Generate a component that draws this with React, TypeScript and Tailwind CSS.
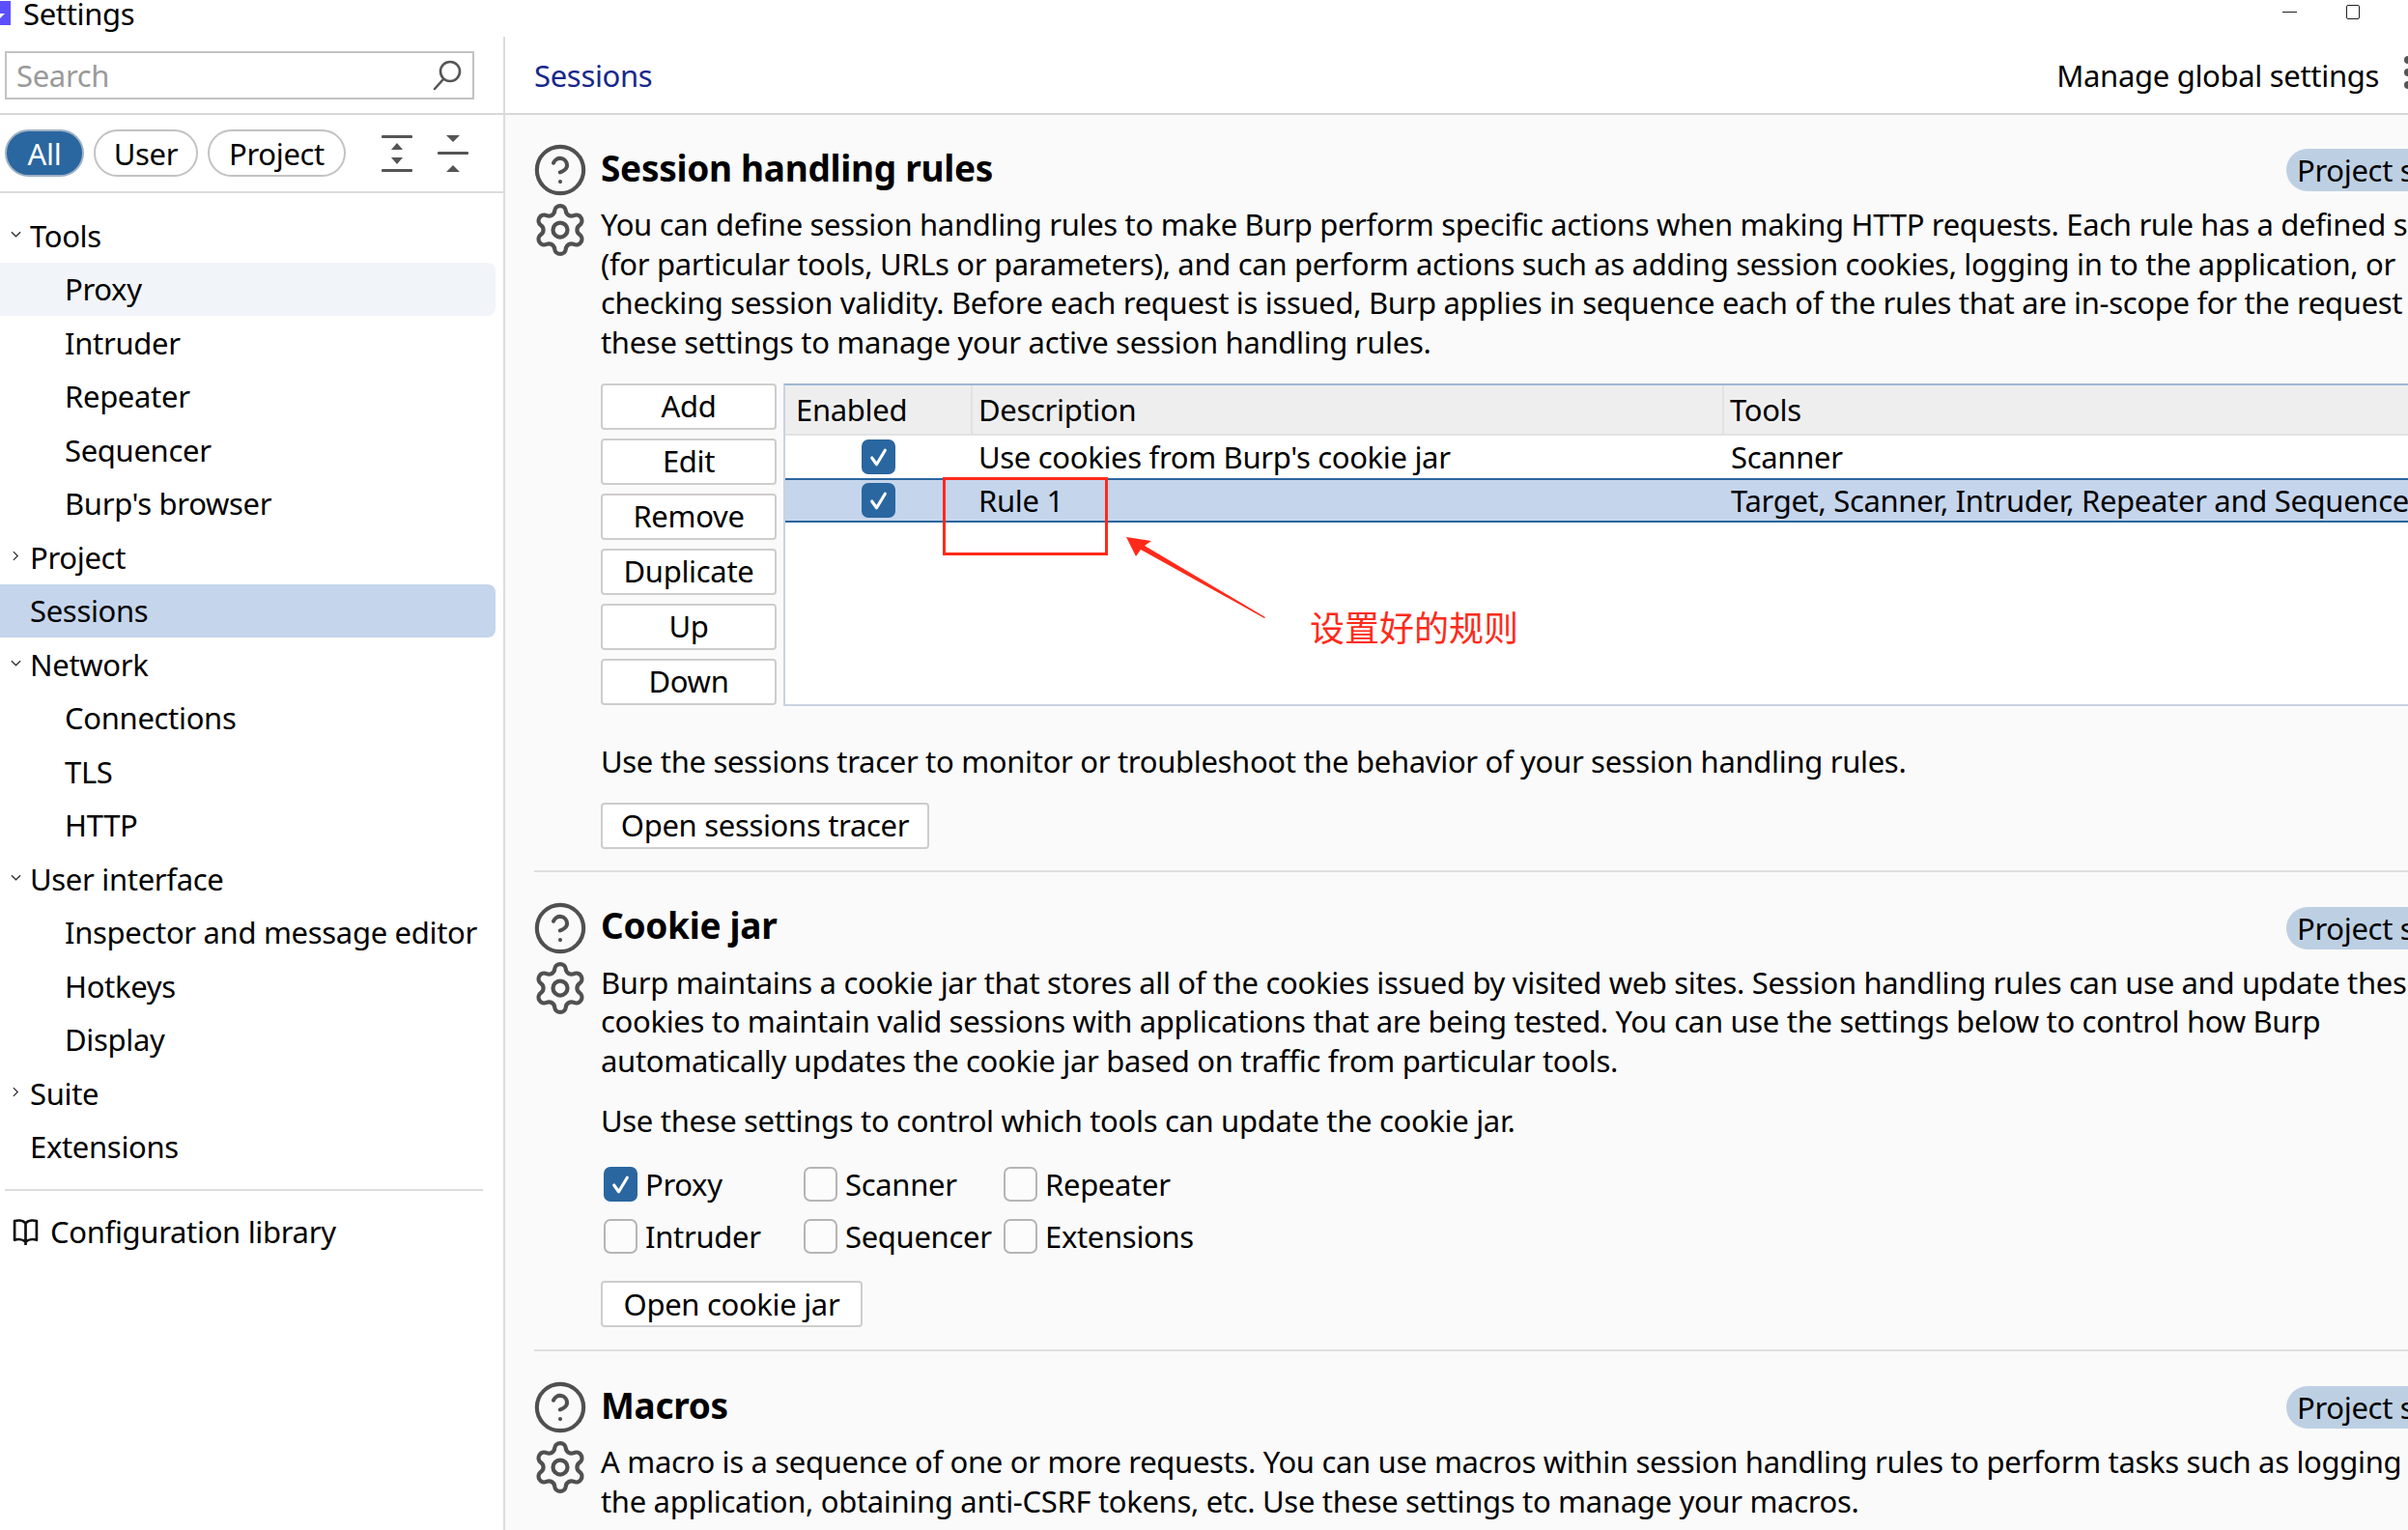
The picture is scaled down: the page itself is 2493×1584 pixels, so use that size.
import { Settings as Gear, CircleHelp } from "lucide-react";

const FONT = "font-['Noto_Sans','Noto_Sans_CJK_SC',sans-serif]";

const tree = [
  { label: "Tools", open: true, level: 0 },
  { label: "Proxy", level: 1, hover: true },
  { label: "Intruder", level: 1 },
  { label: "Repeater", level: 1 },
  { label: "Sequencer", level: 1 },
  { label: "Burp's browser", level: 1 },
  { label: "Project", open: false, level: 0 },
  { label: "Sessions", level: 0, active: true },
  { label: "Network", open: true, level: 0 },
  { label: "Connections", level: 1 },
  { label: "TLS", level: 1 },
  { label: "HTTP", level: 1 },
  { label: "User interface", open: true, level: 0 },
  { label: "Inspector and message editor", level: 1 },
  { label: "Hotkeys", level: 1 },
  { label: "Display", level: 1 },
  { label: "Suite", open: false, level: 0 },
  { label: "Extensions", level: 0 },
];

function Tick() {
  return (
    <svg viewBox="0 0 36 36" className="w-full h-full">
      <path d="M11 19l5 7 9-15" fill="none" stroke="white" strokeWidth="3.2" strokeLinecap="round" strokeLinejoin="round" />
    </svg>
  );
}

function Check({ checked }: { checked?: boolean }) {
  return checked ? (
    <div className="w-[35px] h-[36px] rounded-[7px] bg-[#2a669f] shrink-0">
      <Tick />
    </div>
  ) : (
    <div className="w-[35px] h-[36px] rounded-[7px] border-[2.5px] border-[#b5b5b5] bg-[#fcfcfc] shrink-0" />
  );
}

function Btn({ label, className }: { label: string; className?: string }) {
  return (
    <button className={`h-[48px] bg-white border-2 border-[#cfcccc] rounded-[4px] text-center leading-none ${className ?? ""}`}>
      {label}
    </button>
  );
}

function SectionHead({ title, lines }: { title: string; lines: string[] }) {
  return (
    <div className="flex">
      <div className="w-[69px] shrink-0 text-[#505050]">
        <CircleHelp className="w-[58px] h-[58px] -ml-[2px] -mt-[1px]" strokeWidth={1.7} />
        <Gear className="w-[60px] h-[60px] -ml-[3px] mt-[3px]" strokeWidth={1.7} />
      </div>
      <div className="flex-1 min-w-0">
        <div className="flex items-center justify-between h-[48px] mb-[16px]">
          <h2 className="mt-[2px] text-[37px] font-bold leading-none tracking-[-0.3px]">{title}</h2>
          <div className="h-[44px] w-[172px] -mr-[46px] mt-[8px] pl-[11px] rounded-l-[22px] bg-[#bdd0e3] leading-[44px] overflow-hidden whitespace-nowrap">
            Project settings
          </div>
        </div>
        {lines.map((l) => (
          <p key={l} className="leading-[40.7px] whitespace-nowrap">{l}</p>
        ))}
      </div>
    </div>
  );
}

function Pill({ label, active, w }: { label: string; active?: boolean; w: string }) {
  return (
    <div
      className={`h-[49px] ${w} rounded-full border-2 flex items-center justify-center pt-[2px] ${
        active ? "bg-[#2a669f] border-[#9fb2c4] text-white" : "bg-white border-[#c4c2c2]"
      }`}
    >
      {label}
    </div>
  );
}

export default function App() {
  return (
    <div className={`${FONT} relative w-[2493px] h-[1584px] overflow-hidden bg-white text-black text-[31px] tracking-[-0.32px] flex flex-col`}>
      {/* title bar */}
      <div className="h-[38px] shrink-0 flex items-start relative">
        <div className="w-[11px] h-[25px] mt-[1px] bg-[#5b4fff] relative overflow-hidden">
          <svg viewBox="0 0 11 25" className="absolute inset-0 w-full h-full" fill="white">
            <path d="M0 13h5l-5 5z" />
          </svg>
        </div>
        <span className="ml-[13px] -mt-[6px] leading-[40px]">Settings</span>
        <div className="ml-auto flex items-start mr-[50px]">
          <div className="w-[15px] h-[1px] bg-[#222] mt-[12px] mr-[51px]" />
          <div className="w-[14px] h-[15px] mt-[5px] border border-[#222] rounded-[2px]" />
        </div>
      </div>

      <div className="flex flex-1 min-h-0">
        {/* sidebar */}
        <aside className="w-[523px] shrink-0 border-r-2 border-[#dcdcdc] flex flex-col">
          <div className="h-[81px] shrink-0 border-b-2 border-[#d8d8d8] pl-[5px] pt-[15px]">
            <div className="w-[486px] h-[50px] border-2 border-[#c4c2c2] flex items-center justify-between pl-[10px] pr-[10px]">
              <span className="text-[#9a9a9a]">Search</span>
              <svg viewBox="0 0 32 34" className="w-[32px] h-[34px]" fill="none" stroke="#555" strokeWidth="2.6">
                <circle cx="19" cy="13" r="10" />
                <path d="M12 21L3 31" strokeLinecap="round" />
              </svg>
            </div>
          </div>
          <div className="h-[81px] shrink-0 border-b-2 border-[#dcdcdc] flex items-center pl-[5px]">
            <div className="flex gap-[10px]">
              <Pill label="All" active w="w-[82px]" />
              <Pill label="User" w="w-[108px]" />
              <Pill label="Project" w="w-[143px]" />
            </div>
            <svg viewBox="0 0 32 38" className="w-[32px] h-[38px] ml-[37px]" fill="#555">
              <rect x="0" y="0" width="32" height="3" rx="1" />
              <path d="M16 8l6 7H10zM16 30l-6-7h12z" />
              <rect x="0" y="35" width="32" height="3" rx="1" />
            </svg>
            <svg viewBox="0 0 32 38" className="w-[32px] h-[38px] ml-[26px]" fill="#555">
              <path d="M9 0h14l-7 7zM16 31l7 7H9z" />
              <rect x="0" y="17" width="32" height="3" rx="1" />
            </svg>
          </div>

          <nav className="pt-[16px] pr-[8px]">
            {tree.map((t) => (
              <div
                key={t.label}
                className={`h-[55.5px] flex items-center relative rounded-r-[8px] whitespace-nowrap ${t.level ? "pl-[67px]" : "pl-[31px]"} ${
                  t.active ? "bg-[#c5d5ec]" : t.hover ? "bg-[#f1f4f9]" : ""
                }`}
              >
                {t.open === true && (
                  <svg viewBox="0 0 12 8" className="absolute left-[11px] top-[23px] w-[11px] h-[8px]" fill="none" stroke="#333" strokeWidth="1.5">
                    <path d="M1 1l5 5 5-5" />
                  </svg>
                )}
                {t.open === false && (
                  <svg viewBox="0 0 8 12" className="absolute left-[13px] top-[21px] w-[7px] h-[11px]" fill="none" stroke="#333" strokeWidth="1.5">
                    <path d="M1 1l5 5-5 5" />
                  </svg>
                )}
                {t.label}
              </div>
            ))}
          </nav>
          <div className="ml-[5px] w-[495px] border-t-2 border-[#dcdcdc] mt-[16px] pt-[22px] pl-[7px] flex items-center gap-[11px]">
            <svg viewBox="0 0 28 28" className="w-[29px] h-[29px]" fill="none" stroke="#111" strokeWidth="2.6" strokeLinejoin="round">
              <path d="M14 5C11 2 6 2 3 3v19c3-1 8-1 11 2 3-3 8-3 11-2V3c-3-1-8-1-11 2zM14 5v22" />
            </svg>
            <span className="leading-[40px]">Configuration library</span>
          </div>
        </aside>

        {/* main panel */}
        <main className="flex-1 min-w-0 overflow-hidden flex flex-col bg-[#fafafa]">
          <div className="h-[81px] shrink-0 bg-white border-b-2 border-[#d8d8d8] flex items-center pl-[30px] relative">
            <span className="text-[#17288c] pt-[1px]">Sessions</span>
            <span className="ml-auto mr-[30px] pt-[1px]">Manage global settings</span>
            <div className="absolute right-[-8px] top-[20px] flex flex-col gap-[5px]">
              <div className="w-[12px] h-[8px] rounded-full bg-[#555]" />
              <div className="w-[12px] h-[8px] rounded-full bg-[#555]" />
              <div className="w-[12px] h-[8px] rounded-full bg-[#555]" />
            </div>
          </div>

          <div className="pl-[30px] pt-[29px]">
            <SectionHead
              title="Session handling rules"
              lines={[
                "You can define session handling rules to make Burp perform specific actions when making HTTP requests. Each rule has a defined scope",
                "(for particular tools, URLs or parameters), and can perform actions such as adding session cookies, logging in to the application, or",
                "checking session validity. Before each request is issued, Burp applies in sequence each of the rules that are in-scope for the request",
                "these settings to manage your active session handling rules.",
              ]}
            />
            <div className="ml-[69px] mt-[22px] flex gap-[7px]">
              <div className="w-[182px] shrink-0 flex flex-col gap-[9px]">
                {["Add", "Edit", "Remove", "Duplicate", "Up", "Down"].map((b) => (
                  <Btn key={b} label={b} />
                ))}
              </div>
              <div className="flex-1 -mr-[10px] h-[334px] bg-white border-2 border-[#c9d3e0] border-t-[#a0b6d2] border-r-0">
                <div className="h-[52px] flex items-center bg-[#eeeeee] border-b-2 border-[#e2e2e2]">
                  <div className="w-[194px] h-full flex items-center pl-[11px] border-r-2 border-[#e2e2e2]">Enabled</div>
                  <div className="w-[778px] h-full flex items-center pl-[6px] border-r-2 border-[#e2e2e2]">Description</div>
                  <div className="pl-[6px]">Tools</div>
                </div>
                <div className="h-[44px] flex items-center whitespace-nowrap">
                  <div className="w-[194px] pl-[79px]"><Check checked /></div>
                  <div className="w-[778px] pl-[6px]">Use cookies from Burp's cookie jar</div>
                  <div className="pl-[7px]">Scanner</div>
                </div>
                <div className="h-[46px] flex items-center whitespace-nowrap bg-[#c5d5ec] border-y-2 border-[#2a669f]">
                  <div className="w-[194px] pl-[79px]"><Check checked /></div>
                  <div className="w-[778px] pl-[6px]">Rule 1</div>
                  <div className="pl-[7px]">Target, Scanner, Intruder, Repeater and Sequencer</div>
                </div>
              </div>
            </div>
            <p className="ml-[69px] mt-[37px] leading-[40.7px]">Use the sessions tracer to monitor or troubleshoot the behavior of your session handling rules.</p>
            <Btn label="Open sessions tracer" className="ml-[69px] mt-[22px] w-[340px]" />
            <div className="mt-[22px] border-t-2 border-[#dedede]" />
          </div>

          <div className="pl-[30px] pt-[30px]">
            <SectionHead
              title="Cookie jar"
              lines={[
                "Burp maintains a cookie jar that stores all of the cookies issued by visited web sites. Session handling rules can use and update these",
                "cookies to maintain valid sessions with applications that are being tested. You can use the settings below to control how Burp",
                "automatically updates the cookie jar based on traffic from particular tools.",
              ]}
            />
            <p className="ml-[69px] mt-[21px] leading-[40.7px]">Use these settings to control which tools can update the cookie jar.</p>
            <div className="ml-[72px] mt-[19px] grid grid-cols-[207px_207px_auto] auto-rows-[54px] w-max items-center">
              {[
                ["Proxy", true],
                ["Scanner", false],
                ["Repeater", false],
                ["Intruder", false],
                ["Sequencer", false],
                ["Extensions", false],
              ].map(([label, on]) => (
                <div key={label as string} className="flex items-center gap-[8px]">
                  <Check checked={on as boolean} />
                  <span>{label}</span>
                </div>
              ))}
            </div>
            <Btn label="Open cookie jar" className="ml-[69px] mt-[19px] w-[271px]" />
            <div className="mt-[23px] border-t-2 border-[#dedede]" />
          </div>

          <div className="pl-[30px] pt-[30px]">
            <SectionHead
              title="Macros"
              lines={[
                "A macro is a sequence of one or more requests. You can use macros within session handling rules to perform tasks such as logging in to",
                "the application, obtaining anti-CSRF tokens, etc. Use these settings to manage your macros.",
              ]}
            />
          </div>
        </main>
      </div>

      {/* red annotation over the table */}
      <div className="absolute left-[976px] top-[494px] w-[171px] h-[81px] border-[3px] border-[#ff2a1a]" />
      <svg className="absolute left-[1160px] top-[550px] w-[155px] h-[90px]" viewBox="0 0 155 90" fill="#ff2a1a">
        <path d="M6 6l26 4-7 5 125 74-1 1L21 19l-5 7z" />
      </svg>
      <div className="absolute left-[1356px] top-[628px] text-[36px] tracking-normal leading-[46px] text-[#ff2a1a] whitespace-nowrap">设置好的规则</div>
    </div>
  );
}
